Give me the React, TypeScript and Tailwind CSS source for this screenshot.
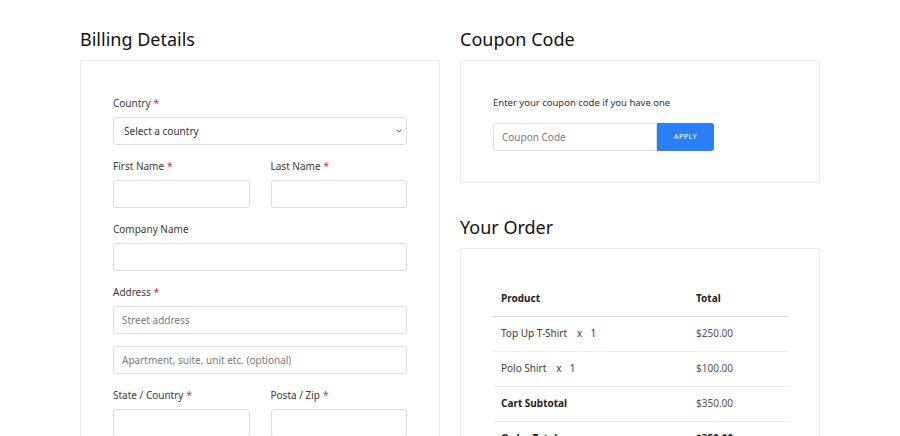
import { ChevronDown } from "lucide-react";

const font = { fontFamily: '"Noto Sans", "Open Sans", sans-serif' };

function Label({ text, req }: { text: string; req?: boolean }) {
  return (
    <label className="block text-[10px] leading-4 text-[#3a3a3a] mb-[6px]">
      {text}
      {req && <span className="text-[#e0234b] ml-[3px]">*</span>}
    </label>
  );
}

function Input({ placeholder }: { placeholder?: string }) {
  return (
    <input
      placeholder={placeholder}
      className="block w-full h-[28px] rounded-[3px] border border-[#dfdfdf] bg-white px-[8px] text-[10px] text-[#333] placeholder:text-[#7a7a7a] outline-none"
    />
  );
}

function Field({ label, req, children }: { label: string; req?: boolean; children: React.ReactNode }) {
  return (
    <div className="mb-[13px]">
      <Label text={label} req={req} />
      {children}
    </div>
  );
}

function Heading({ children, className = "mt-[26px]" }: { children: React.ReactNode; className?: string }) {
  return <h2 className={`text-[18px] leading-[26px] text-[#111] mb-[8px] ${className}`}>{children}</h2>;
}

function BillingDetails() {
  return (
    <div>
      <Heading>Billing Details</Heading>
      <div className="border border-[#ececec] px-[32px] pt-[34px] pb-[20px]">
        <Field label="Country" req>
          <div className="relative">
            <select className="block w-full h-[28px] appearance-none rounded-[3px] border border-[#dfdfdf] bg-white px-[10px] text-[10px] text-[#333] outline-none">
              <option>Select a country</option>
            </select>
            <ChevronDown className="absolute right-[4px] top-[10px] w-[8px] h-[8px] text-[#555]" strokeWidth={2.5} />
          </div>
        </Field>
        <div className="grid grid-cols-2 gap-x-[21px]">
          <Field label="First Name" req>
            <Input />
          </Field>
          <Field label="Last Name" req>
            <Input />
          </Field>
        </div>
        <Field label="Company Name">
          <Input />
        </Field>
        <Field label="Address" req>
          <div className="flex flex-col gap-[12px]">
            <Input placeholder="Street address" />
            <Input placeholder="Apartment, suite, unit etc. (optional)" />
          </div>
        </Field>
        <div className="grid grid-cols-2 gap-x-[21px]">
          <Field label="State / Country" req>
            <Input />
          </Field>
          <Field label="Posta / Zip" req>
            <Input />
          </Field>
        </div>
      </div>
    </div>
  );
}

function Coupon() {
  return (
    <div>
      <Heading>Coupon Code</Heading>
      <div className="border border-[#ececec] px-[32px] pt-[34px] pb-[31px]">
        <p className="text-[9.5px] leading-4 text-[#333] mb-[12px]">Enter your coupon code if you have one</p>
        <div className="flex">
          <input
            placeholder="Coupon Code"
            className="w-[164px] h-[28px] rounded-l-[3px] border border-[#dfdfdf] px-[8px] text-[10px] placeholder:text-[#7a7a7a] outline-none"
          />
          <button className="w-[57px] h-[28px] rounded-r-[3px] bg-[#2b7ff6] text-white text-[7.5px] tracking-[0.3px]">
            APPLY
          </button>
        </div>
      </div>
    </div>
  );
}

const rows = [
  { name: "Top Up T-Shirt", qty: 1, price: "$250.00" },
  { name: "Polo Shirt", qty: 1, price: "$100.00" },
];

function YourOrder() {
  return (
    <div>
      <Heading className="mt-[31px]">Your Order</Heading>
      <div className="border border-[#ececec] px-[32px] pt-[32px] pb-[20px]">
        <table className="w-[295px] text-[10px] text-[#222]">
          <thead>
            <tr className="border-b border-[#d9d9d9]">
              <th className="h-[35px] pl-[8px] text-left font-bold w-[195px]">Product</th>
              <th className="pl-[8px] text-left font-bold">Total</th>
            </tr>
          </thead>
          <tbody>
            {rows.map((r) => (
              <tr key={r.name} className="border-b border-[#ececec]">
                <td className="h-[35px] pl-[8px] text-[#3a3a3a]">
                  {r.name}
                  <span className="ml-[10px]">x</span>
                  <span className="ml-[8px]">{r.qty}</span>
                </td>
                <td className="pl-[8px] text-[#555]">{r.price}</td>
              </tr>
            ))}
            <tr className="border-b border-[#ececec]">
              <td className="h-[35px] pl-[8px] font-bold">Cart Subtotal</td>
              <td className="pl-[8px] text-[#555]">$350.00</td>
            </tr>
            <tr>
              <td className="h-[35px] pl-[8px] font-bold">Order Total</td>
              <td className="pl-[8px] font-bold">$350.00</td>
            </tr>
          </tbody>
        </table>
      </div>
    </div>
  );
}

export default function App() {
  return (
    <div className="min-h-screen bg-white" style={font}>
      <div className="mx-auto w-[740px] grid grid-cols-2 gap-x-[20px] items-start">
        <BillingDetails />
        <div>
          <Coupon />
          <YourOrder />
        </div>
      </div>
    </div>
  );
}
